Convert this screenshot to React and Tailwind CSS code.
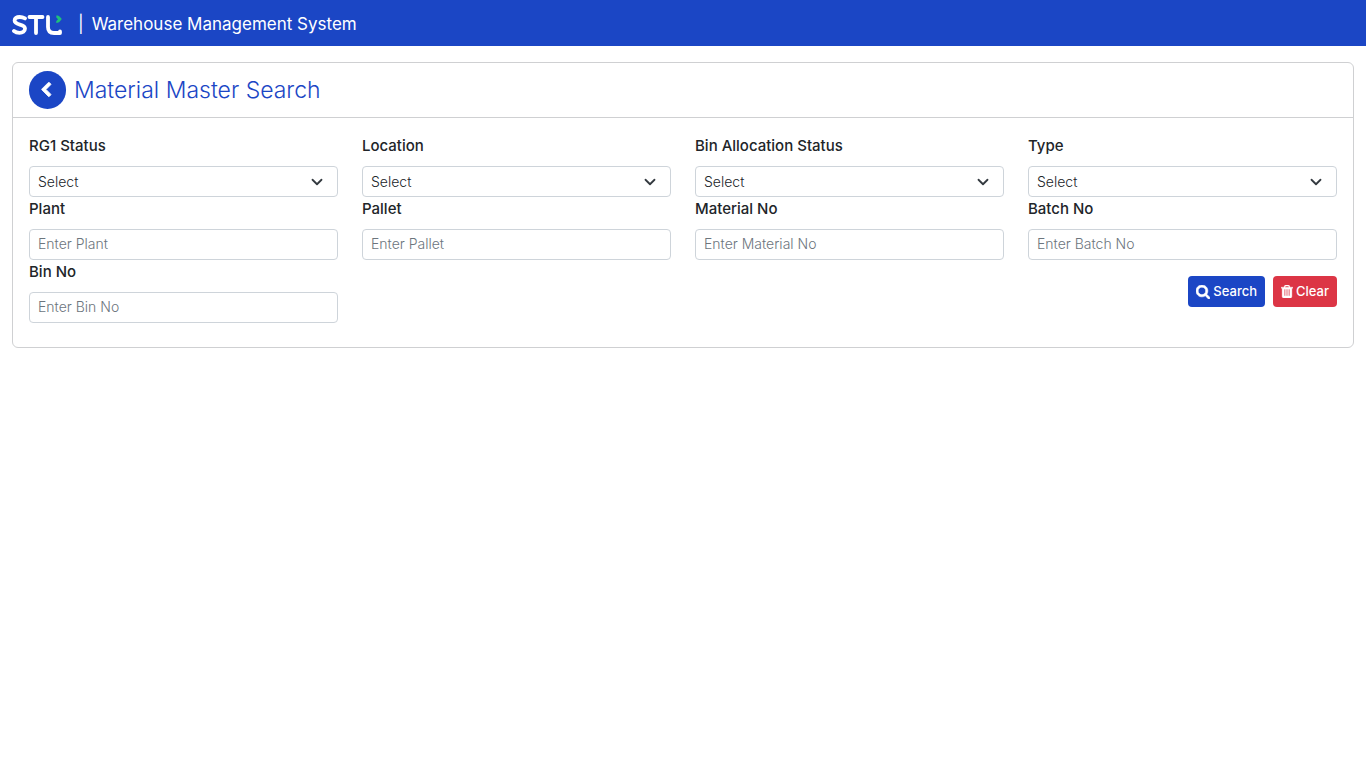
import React from "react";

const selects = [
  { id: "rg1", label: "RG1 Status" },
  { id: "location", label: "Location" },
  { id: "allocation", label: "Bin Allocation Status" },
  { id: "type", label: "Type" },
];

const inputs = [
  { id: "plant", label: "Plant" },
  { id: "pallet", label: "Pallet" },
  { id: "material", label: "Material No" },
  { id: "batch", label: "Batch No" },
  { id: "bin", label: "Bin No" },
];

function Logo() {
  return (
    <svg viewBox="0 0 50 20" className="h-5 w-[50px]" fill="none" strokeWidth="3.8" strokeLinecap="round" strokeLinejoin="round" role="img" aria-label="STL">
      <g stroke="#fff">
        <path d="M13 3.4C11.4 2.5 9.6 2 7.6 2 4.6 2 2.6 3.2 2.6 5.6 2.6 10.8 13 8.4 13 13.600 13 16.400 10.600 17.800 7.600 17.800 5.400 17.800 3.400 17.200 2 16" />
        <path d="M17.500 2H30.500M24 2V18" />
        <path d="M36 2V12C36 16 38 18 42 18H48V16.500" />
      </g>
      <path d="M44.300 .5C45.500 .3 46.800 .8 47.800 1.800L49.800 4.100 47.800 6.500C46.800 7.600 45.500 8 44.300 7.900V6L46 4.200 44.300 2.400Z" fill="#1fc07a" />
    </svg>
  );
}

function Field({ id, label, children }) {
  return (
    <div className="flex flex-col gap-2">
      <label htmlFor={id} className="text-[15px] leading-6 font-medium">{label}</label>
      {children}
    </div>
  );
}

export default function App() {
  return (
    <div className="min-h-screen bg-white font-['Inter',sans-serif] text-[#212529]">
      <header className="flex h-[46px] items-center bg-[#1b46c5] px-3 pt-1 text-white">
        <Logo />
        <span className="ml-4 text-[17px]">|</span>
        <span className="ml-2 text-[17px]">Warehouse Management System</span>
      </header>
      <main className="px-3 pt-4">
        <section className="rounded-md border border-[#cfd0d2]">
          <div className="flex items-center gap-2 border-b border-[#cfd0d2] px-4 py-2">
            <button type="button" aria-label="Back" className="flex h-[38px] w-[37px] items-center justify-center rounded-full bg-[#1b46c5] pr-1 text-white">
              <svg viewBox="0 0 1792 1792" className="size-4" fill="currentColor" stroke="currentColor" strokeWidth="90" strokeLinejoin="round">
                <path d="M1427 301l-531 531 531 531q19 19 19 45t-19 45l-166 166q-19 19-45 19t-45-19l-742-742q-19-19-19-45t19-45l742-742q19-19 45-19t45 19l166 166q19 19 19 45t-19 45z" />
              </svg>
            </button>
            <h1 className="text-[23px] leading-8 font-light text-[#1b46c5]">Material Master Search</h1>
          </div>
          <form className="grid grid-cols-4 gap-x-6 px-4 pt-4 pb-6" onSubmit={(e) => e.preventDefault()}>
            {selects.map((f) => (
              <Field key={f.id} id={f.id} label={f.label}>
                <div className="grid items-center">
                  <select id={f.id} className="col-start-1 row-start-1 h-[31px] w-full appearance-none rounded border border-[#ced4da] bg-white px-2 text-sm font-light">
                    <option>Select</option>
                  </select>
                  <svg viewBox="0 0 16 16" className="pointer-events-none col-start-1 row-start-1 mr-[15px] size-3 justify-self-end" fill="none" stroke="#343a40" strokeWidth="2.4" strokeLinecap="round" strokeLinejoin="round">
                    <path d="m2 5 6 6 6-6" />
                  </svg>
                </div>
              </Field>
            ))}
            {inputs.map((f) => (
              <Field key={f.id} id={f.id} label={f.label}>
                <input id={f.id} type="text" placeholder={"Enter " + f.label} className="h-[31px] w-full rounded border border-[#ced4da] bg-white px-2 pb-0.5 text-sm font-light placeholder:text-[#6c757d]" />
              </Field>
            ))}
            <div className="col-span-3 flex items-start justify-end gap-2 pt-4">
              <button type="submit" className="flex h-[31px] items-center gap-[3px] rounded bg-[#1b46c5] px-2 text-[13px] font-medium text-white">
                <svg viewBox="0 128 1664 1664" className="size-3.5" fill="currentColor" stroke="currentColor" strokeWidth="70">
                  <path d="M1152 832q0-185-131.500-316.500t-316.500-131.500-316.500 131.500-131.500 316.500 131.500 316.500 316.500 131.500 316.500-131.500 131.500-316.500zm512 832q0 52-38 90t-90 38q-54 0-90-38l-343-342q-179 124-399 124-143 0-273.500-55.500t-225-150-150-225-55.500-273.500 55.500-273.500 150-225 225-150 273.500-55.500 273.500 55.500 225 150 150 225 55.500 273.500q0 220-124 399l343 343q37 37 37 90z" />
                </svg>
                Search
              </button>
              <button type="reset" className="flex h-[31px] items-center gap-[3px] rounded bg-[#dc3545] px-2 text-[13px] font-medium text-white">
                <svg viewBox="192 128 1408 1536" className="h-[13px] w-3" fill="currentColor" stroke="currentColor" strokeWidth="40">
                  <path d="M704 1376v-704q0-14-9-23t-23-9h-64q-14 0-23 9t-9 23v704q0 14 9 23t23 9h64q14 0 23-9t9-23zm256 0v-704q0-14-9-23t-23-9h-64q-14 0-23 9t-9 23v704q0 14 9 23t23 9h64q14 0 23-9t9-23zm256 0v-704q0-14-9-23t-23-9h-64q-14 0-23 9t-9 23v704q0 14 9 23t23 9h64q14 0 23-9t9-23zm-544-992h448l-48-117q-7-9-17-11h-317q-10 2-17 11zm928 32v64q0 14-9 23t-23 9h-96v948q0 83-47 143.500t-113 60.500h-832q-66 0-113-58.500t-47-141.500v-952h-96q-14 0-23-9t-9-23v-64q0-14 9-23t23-9h309l70-167q15-37 54-63t79-26h320q40 0 79 26t54 63l70 167h309q14 0 23 9t9 23z" />
                </svg>
                Clear
              </button>
            </div>
          </form>
        </section>
      </main>
    </div>
  );
}
